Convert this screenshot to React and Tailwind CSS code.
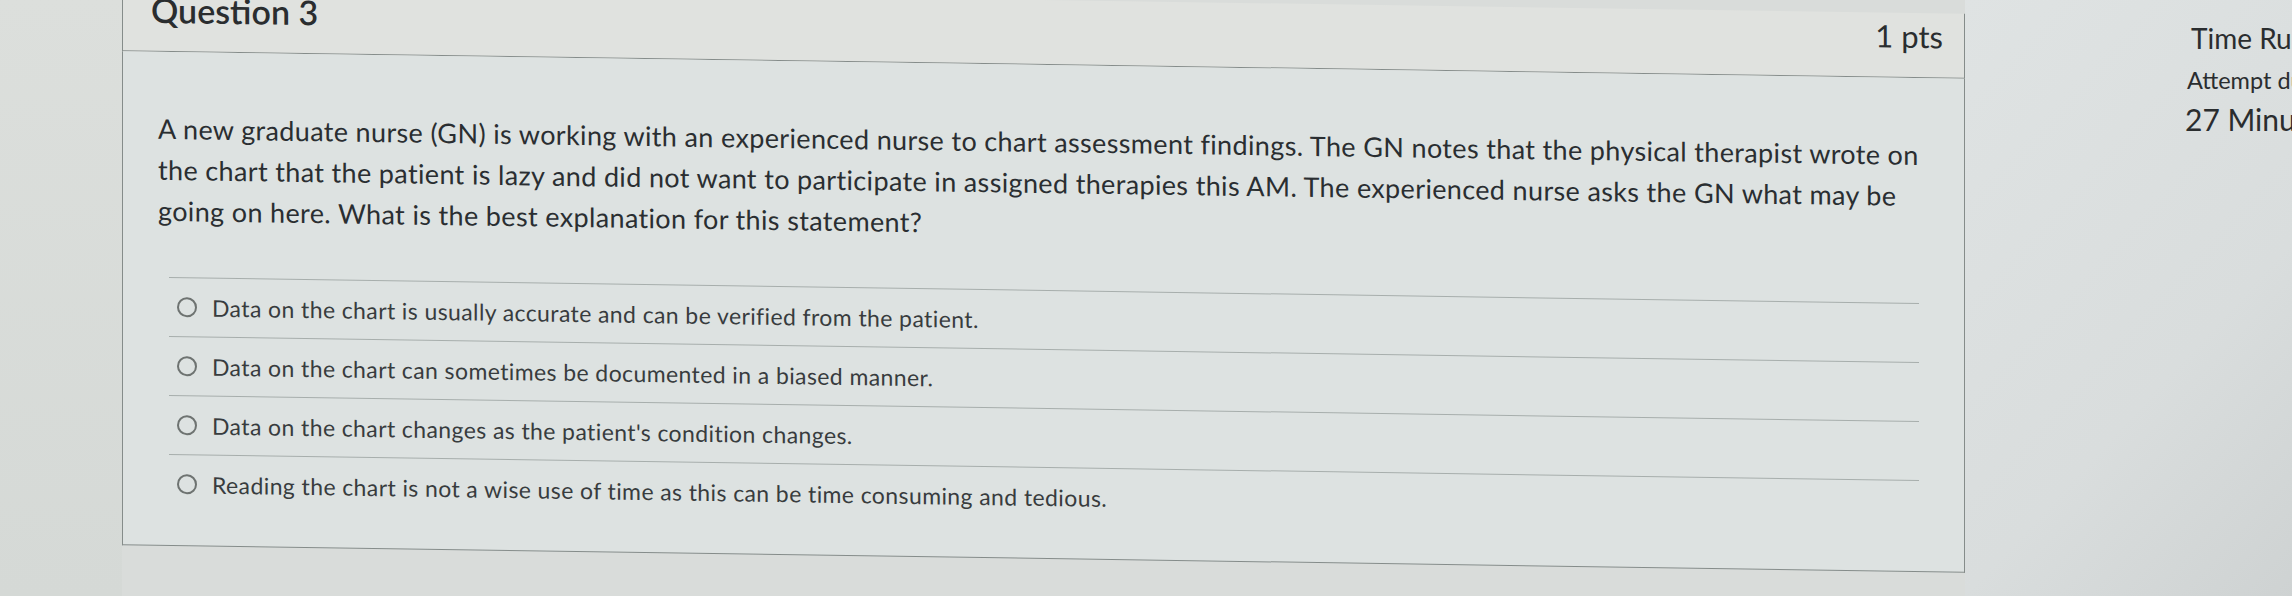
export default function App() {
  const answers = [
    "Data on the chart is usually accurate and can be verified from the patient.",
    "Data on the chart can sometimes be documented in a biased manner.",
    "Data on the chart changes as the patient's condition changes.",
    "Reading the chart is not a wise use of time as this can be time consuming and tedious.",
  ];
  const lines = [
    "A new graduate nurse (GN) is working with an experienced nurse to chart assessment findings. The GN notes that the physical therapist wrote on",
    "the chart that the patient is lazy and did not want to participate in assigned therapies this AM. The experienced nurse asks the GN what may be",
    "going on here. What is the best explanation for this statement?",
  ];
  return (
    <div className="w-[2292px] h-[596px] overflow-hidden bg-[#d9dcda] flex font-['Lato','Liberation_Sans',sans-serif] text-[#2c3033]">
      <div className="w-[122px] shrink-0 bg-gradient-to-b from-[#dcdfdc] to-[#d5d9d6]" />
      <div className="w-[1843px] shrink-0 self-start skew-y-[0.85deg]">
        <div className="bg-[#e0e2df] h-[65px] border-l border-r border-b border-[#858c8a] flex justify-between">
          <h2 className="ml-[28px] mt-[6px] text-[34px] leading-none font-semibold text-[#2a2d2f]">Question 3</h2>
          <div className="mr-[21px] mt-[8px] text-[31px] leading-none text-[#2a2d2f]">1 pts</div>
        </div>
        <div className="bg-[#dde2e1] border-l border-r border-b border-[#858c8a] pt-[56px] pb-[32px]">
          <div className="pl-[35px] text-[27px] tracking-[0.35px] leading-[41px] text-[#2a2e31] whitespace-nowrap">
            {lines.map((l) => (
              <p key={l}>{l}</p>
            ))}
          </div>
          <div className="mt-[46px] ml-[46px] mr-[45px]">
            {answers.map((a) => (
              <div key={a} className="h-[59px] border-t border-[#a7aeac] flex items-center">
                <span className="ml-[8px] w-[20px] h-[20px] rounded-full border-2 border-[#6e7371] shrink-0" />
                <span className="ml-[15px] text-[23px] tracking-[0.4px] text-[#383c3e]">{a}</span>
              </div>
            ))}
          </div>
        </div>
      </div>
      <div className="flex-1 bg-gradient-to-br from-[#dfe3e3] via-[#d9dddd] to-[#c7cbcb] pl-[226px] pt-[21px] whitespace-nowrap text-[#2a2d2f]">
        <div className="text-[28px] leading-[34px]">Time Running:</div>
        <div className="mt-[12px] ml-[-4px] text-[23.5px] leading-[27px]">Attempt due: Nov 6 at 11:59pm</div>
        <div className="mt-[7px] ml-[-6px] text-[30px] leading-[36px]">27 Minutes, 41 Seconds</div>
      </div>
    </div>
  );
}
